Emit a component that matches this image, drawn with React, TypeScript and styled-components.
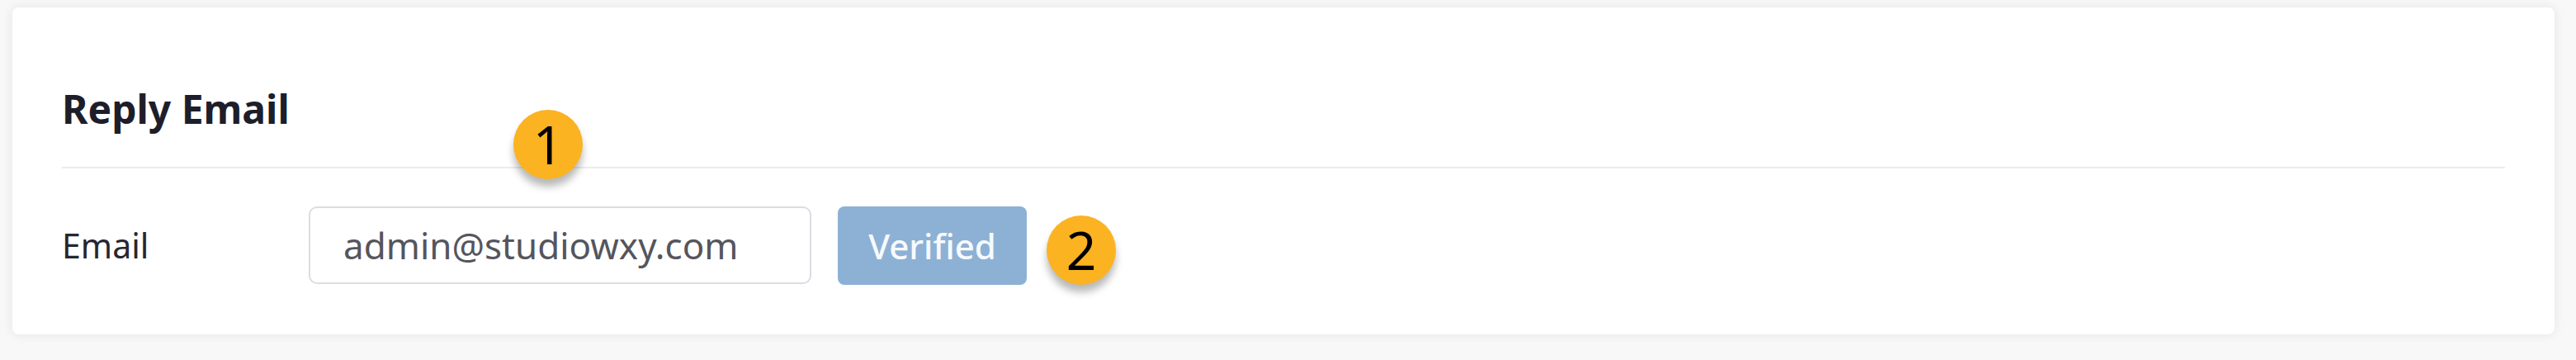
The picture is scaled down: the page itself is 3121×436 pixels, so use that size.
import styled, { createGlobalStyle } from "styled-components";

const GlobalStyle = createGlobalStyle`
  html, body {
    margin: 0;
    padding: 0;
    background: #f8f8f9;
    font-family: "Noto Sans", "Open Sans", Arial, sans-serif;
  }
  * { box-sizing: border-box; }
`;

const Page = styled.div`
  padding: 9px 26px 31px 15px;
`;

const Card = styled.section`
  position: relative;
  height: 396px;
  padding: 0 60px;
  background: #ffffff;
  border-radius: 8px;
  box-shadow: 0 0 14px rgba(30, 35, 60, 0.09);
`;

const Header = styled.div`
  height: 195px;
  display: flex;
  align-items: flex-end;
  padding-bottom: 46px;
  border-bottom: 2px solid #ececef;
`;

const Title = styled.h2`
  margin: 0;
  font-size: 48px;
  line-height: 48px;
  font-weight: 700;
  color: #1d1e2a;
`;

const Row = styled.div`
  display: flex;
  align-items: center;
  padding-top: 45px;
`;

const Label = styled.label`
  width: 299px;
  flex-shrink: 0;
  font-size: 41px;
  color: #262630;
`;

const EmailInput = styled.input`
  width: 609px;
  height: 94px;
  padding: 0 0 0 40px;
  border: 2px solid #dcdde3;
  border-radius: 10px;
  font-family: inherit;
  font-size: 44px;
  color: #55555d;
  background: #fff;
  outline: none;
`;

const VerifyButton = styled.button`
  margin-left: 32px;
  width: 229px;
  height: 95px;
  border: none;
  border-radius: 8px;
  background: #8db1d4;
  color: #f7fafd;
  font-family: inherit;
  font-size: 42px;
  font-weight: 500;
  cursor: default;
`;

const Badge = styled.span<{ $floating?: boolean }>`
  width: 84px;
  height: 84px;
  border-radius: 50%;
  background: #fbb322;
  color: #000;
  display: inline-flex;
  align-items: center;
  justify-content: center;
  font-size: 64px;
  font-weight: 400;
  line-height: 1;
  box-shadow: 0 9px 10px rgba(0, 0, 0, 0.28);
  ${p => p.$floating
    ? `position: absolute; left: 607px; top: 124px;`
    : `margin-left: 24px; margin-top: 12px;`}
`;

export default function App() {
  return (
    <>
      <GlobalStyle />
      <Page>
        <Card>
          <Header>
            <Title>Reply Email</Title>
          </Header>
          <Badge $floating>1</Badge>
          <Row>
            <Label htmlFor="reply-email">Email</Label>
            <EmailInput id="reply-email" defaultValue="admin@studiowxy.com" readOnly />
            <VerifyButton>Verified</VerifyButton>
            <Badge>2</Badge>
          </Row>
        </Card>
      </Page>
    </>
  );
}
